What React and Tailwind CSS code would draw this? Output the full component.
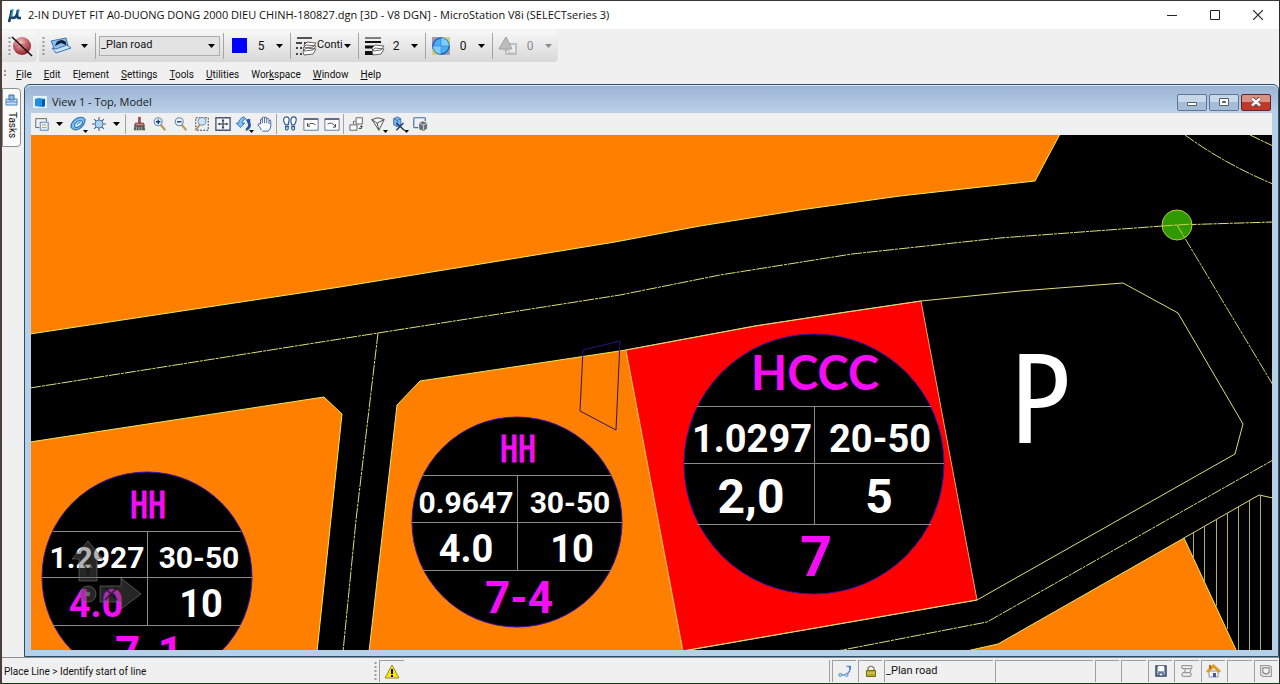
import React from 'react';

const Caret = ({ className = 'text-black' }) => (
  <svg width="7" height="4" viewBox="0 0 7 4" className={className} aria-hidden="true">
    <path d="M0 0h7L3.5 4z" fill="currentColor" />
  </svg>
);

const Icon = ({ size = 18, children }) => (
  <svg width={size} height={size} viewBox="0 0 18 18" fill="none" className="shrink-0" aria-hidden="true">
    {children}
  </svg>
);

const Grip = () => (
  <svg width="3" height="18" viewBox="0 0 3 18" className="shrink-0" aria-hidden="true">
    <path d="M1.5 0v18" stroke="#9a9a9a" strokeWidth="2" strokeDasharray="2 2" />
  </svg>
);

const Separator = () => <div className="mx-[3px] h-[26px] w-px shrink-0 bg-[#a5a5a5]" />;

/* ---------- attribute toolbar icons ---------- */

const NoActiveIcon = () => (
  <svg width="22" height="22" viewBox="0 0 22 22" aria-hidden="true">
    <defs>
      <radialGradient id="ball" cx="0.4" cy="0.3" r="0.7">
        <stop offset="0" stopColor="#f3c9cb" />
        <stop offset="0.45" stopColor="#cf7479" />
        <stop offset="1" stopColor="#8e2029" />
      </radialGradient>
    </defs>
    <circle cx="11" cy="11" r="9" fill="url(#ball)" />
    <path d="M3 12q8-5 16 0" stroke="#b0535a" strokeWidth="0.8" fill="none" />
    <path d="M1 2l20 19" stroke="#111" strokeWidth="1.6" />
  </svg>
);

const TemplateIcon = () => (
  <svg width="24" height="20" viewBox="0 0 24 20" aria-hidden="true">
    <path d="M2 5l15-3 2 8-13 4z" fill="#8fc0f0" stroke="#3a73bd" />
    <path d="M3 12l4 5 15-5-4-3-11 4z" fill="#cfe4f8" stroke="#3a73bd" />
    <path d="M6 10q1-6 7-6 5 1 4 5l-5-2z" fill="#0d2238" />
  </svg>
);

const LineStyleIcon = () => (
  <svg width="21" height="20" viewBox="0 0 21 20" aria-hidden="true">
    <path d="M1 2h15" stroke="#111" strokeWidth="1.4" />
    <path d="M0 7h15" stroke="#111" strokeWidth="1.4" strokeDasharray="6 2" />
    <path d="M0 12h8M0 18h8" stroke="#111" strokeWidth="1.4" strokeDasharray="2 2" />
    <path d="M7 15l3-3 10 1-3 5-9 1zM7 12l3-3 10 1-3 4-9 1zM8 9l3-3 9 1-3 4-8 1z" fill="#fff" stroke="#444" strokeWidth="0.8" />
  </svg>
);

const WeightIcon = () => (
  <svg width="21" height="20" viewBox="0 0 21 20" aria-hidden="true">
    <path d="M1 2h16" stroke="#111" />
    <path d="M1 6h16" stroke="#111" strokeWidth="2" />
    <path d="M1 11h9" stroke="#111" strokeWidth="3" />
    <path d="M1 17h8" stroke="#111" strokeWidth="4" />
    <path d="M8 15l3-3 9 1-3 5-8 1zM8 12l3-3 9 1-3 4-8 1z" fill="#fff" stroke="#444" strokeWidth="0.8" />
  </svg>
);

const TransparencyIcon = () => (
  <svg width="20" height="20" viewBox="0 0 20 20" aria-hidden="true">
    <path d="M1 1h18v18H1z" fill="#a39ab0" />
    <path d="M10 1h9v9zM1 12v7h8z" fill="#d8cf7c" />
    <circle cx="10" cy="10" r="8" fill="#4aaef0" stroke="#1c62c4" strokeWidth="1.5" />
    <path d="M10 2v8h8a8 8 0 0 0-8-8M10 10v8a8 8 0 0 1-8-8z" fill="#7fcdfa" />
    <path d="M10 2v16M2 10h16" stroke="#2b80d8" strokeWidth="0.6" />
  </svg>
);

const PriorityIcon = () => (
  <svg width="20" height="20" viewBox="0 0 20 20" aria-hidden="true">
    <path d="M8 8h10v10H8z" fill="#ededed" stroke="#b3b3b3" strokeWidth="1.5" />
    <path d="M8 1L1 13h13z" fill="#bdbdbd" stroke="#a0a0a0" />
    <path d="M5 14h6v3h5" stroke="#b3b3b3" fill="none" />
  </svg>
);

const AttributeButton = ({ label, icon, value, disabled }) => (
  <button type="button" aria-label={label} disabled={disabled} className="flex h-[26px] w-[60px] items-center">
    <span className="flex w-6 shrink-0 justify-center">{icon}</span>
    <span className={disabled ? 'w-[21px] text-center text-[#8b8b8b]' : 'w-[21px] text-center'}>{value}</span>
    <span className="flex w-4 justify-center">
      <Caret className={disabled ? 'text-[#8b8b8b]' : 'text-black'} />
    </span>
  </button>
);

const AttributeToolbar = () => (
  <div className="flex h-[33px] items-center gap-[2px] text-xs">
    <div className="flex h-8 w-[35px] items-center rounded-r bg-linear-to-b from-[#f8f8f8] to-[#dedede] pl-[6px]">
      <Grip />
      <button type="button" aria-label="Element template">
        <NoActiveIcon />
      </button>
    </div>
    <div className="flex h-8 items-center rounded-r bg-linear-to-b from-[#f8f8f8] to-[#d8d8d8] pr-[2px] pl-[3px]">
      <Grip />
      <button type="button" aria-label="Active template" className="ml-1 flex items-center gap-2 pr-1">
        <TemplateIcon />
        <Caret />
      </button>
      <Separator />
      <div className="relative">
        <select
          aria-label="Active level"
          defaultValue="_Plan road"
          className="h-5 w-[121px] appearance-none border border-[#adadad] bg-[#e3e3e3] pl-px text-[11px]"
        >
          <option>_Plan road</option>
        </select>
        <span className="pointer-events-none absolute top-2 right-[5px]">
          <Caret />
        </span>
      </div>
      <Separator />
      <AttributeButton label="Active color" icon={<span className="size-[15px] bg-[#0000ff]" />} value="5" />
      <Separator />
      <button type="button" aria-label="Active line style" className="flex h-[26px] w-[61px] items-center pl-[2px] text-[11px]">
        <LineStyleIcon />
        <span className="w-[27px] text-left">Conti</span>
        <Caret />
      </button>
      <Separator />
      <AttributeButton label="Active line weight" icon={<WeightIcon />} value="2" />
      <Separator />
      <AttributeButton label="Active transparency" icon={<TransparencyIcon />} value="0" />
      <Separator />
      <AttributeButton label="Active priority" icon={<PriorityIcon />} value="0" disabled />
    </div>
  </div>
);

/* ---------- menu ---------- */

const menus = [
  ['', 'F', 'ile'],
  ['', 'E', 'dit'],
  ['E', 'l', 'ement'],
  ['', 'S', 'ettings'],
  ['', 'T', 'ools'],
  ['', 'U', 'tilities'],
  ['Wor', 'k', 'space'],
  ['', 'W', 'indow'],
  ['', 'H', 'elp'],
];

const MenuBar = () => (
  <nav className="flex h-[22px] items-center gap-3 pt-[2px] pl-[2px] text-[10px]">
    <svg width="2" height="8" viewBox="0 0 2 8" className="-mr-[2px]" aria-hidden="true">
      <path d="M1 0v8" stroke="#9a9a9a" strokeWidth="2" strokeDasharray="2 2" />
    </svg>
    {menus.map(([before, key, after]) => (
      <button key={before + key + after} type="button">
        {before}
        <span className="underline">{key}</span>
        {after}
      </button>
    ))}
  </nav>
);

/* ---------- view tools ---------- */

const Magnifier = ({ children }) => (
  <>
    <path d="M9 9l6 7" stroke="#c49a4a" strokeWidth="2.4" />
    <circle cx="7" cy="6.5" r="4.5" fill="#e3eefb" stroke="#6e87ab" strokeWidth="1.2" />
    {children}
  </>
);

const viewTools = [
  {
    name: 'View attributes',
    caret: true,
    icon: (
      <>
        <path d="M6 13H2V3h12v3" stroke="#555" />
        <path d="M7 7h9v9H7z" fill="#e9f1fc" stroke="#4a77b5" />
        <path d="M9 10h5M9 13h5" stroke="#c09a3c" />
      </>
    ),
  },
  {
    name: 'Display style',
    corner: true,
    icon: (
      <>
        <path d="M1 12q1-7 8-10 6-2 8 2 0 6-6 10-7 4-10-2z" fill="#7cc0f0" stroke="#2e6cb0" strokeWidth="1.2" />
        <path d="M5 11q1-5 6-6 4 0 3 3-2 4-6 5-3 0-3-2z" fill="#d6eefc" stroke="#2e78c4" strokeWidth="1.2" />
        <path d="M8 10q1-3 4-3" stroke="#2e6cb0" />
      </>
    ),
  },
  {
    name: 'Adjust brightness',
    caret: true,
    icon: (
      <>
        <path d="M9 1v16M1 9h16M3.5 3.5l11 11M14.5 3.5l-11 11" stroke="#4c5f75" strokeWidth="1.2" />
        <circle cx="9" cy="9" r="4.5" fill="#a8d4f5" stroke="#4c6e95" />
      </>
    ),
  },
  {
    name: 'Update view',
    separated: true,
    icon: (
      <>
        <path d="M8 1h3v7H8z" fill="#9c4a45" />
        <path d="M5 8h9l1 3H4z" fill="#c98f86" stroke="#6b2f2b" />
        <path d="M4 11h11l1 5H3z" fill="#555" />
        <path d="M6 12v4M9 12v4M12 12v4" stroke="#bbb" />
      </>
    ),
  },
  {
    name: 'Zoom in',
    icon: (
      <Magnifier>
        <path d="M4.5 6.5h5M7 4v5" stroke="#1b3a66" strokeWidth="1.5" />
      </Magnifier>
    ),
  },
  {
    name: 'Zoom out',
    icon: (
      <Magnifier>
        <path d="M4.5 6.5h5" stroke="#1b3a66" strokeWidth="1.5" />
      </Magnifier>
    ),
  },
  {
    name: 'Window area',
    icon: (
      <>
        <path d="M2 2h14v14H2z" stroke="#222" strokeDasharray="2 1.5" />
        <path d="M7 9l-5 7" stroke="#c49a4a" strokeWidth="2.4" />
        <circle cx="9" cy="6" r="4.5" fill="#cfe3fa" stroke="#6e87ab" />
      </>
    ),
  },
  {
    name: 'Fit view',
    icon: (
      <>
        <path d="M1 2h16v14H1z" fill="#f2f4f7" stroke="#4a566b" strokeWidth="1.5" />
        <path d="M9 4v10M4 9h10" stroke="#2d3848" strokeWidth="1.2" />
        <path d="M9 3.5L7.5 6h3zM9 14.5L7.5 12h3zM3 9l2.5-1.5v3zM15 9l-2.5-1.5v3z" fill="#2d3848" />
      </>
    ),
  },
  {
    name: 'Rotate view',
    corner: true,
    icon: (
      <>
        <path d="M9 1Q3 3 3 8H0l5 5 5-5H7q0-3 4-5z" fill="#7fc2ef" stroke="#2b70b5" />
        <path d="M11 4l5-1v4q3 7-5 10v-3q4-3 2-6z" fill="#2656a0" />
      </>
    ),
  },
  {
    name: 'Pan view',
    icon: (
      <path
        d="M5 16q-1-3-4-6 0-2 3-1V4q2-2 2 0V2q2-2 2.5 0V1.5q2-1 2.5 1V3q2-1 2.5 1v1q2-1 2 1v5q0 4-3 6H6M6 4v4M8.5 2v6M11 2.5V8M13.5 5v4"
        fill="#fff"
        stroke="#2f5597"
      />
    ),
  },
  {
    name: 'Walk',
    separated: true,
    icon: (
      <>
        <path d="M5 1q3 0 3 4-1 3-1 5H4Q1 5 2 3q1-2 3-2zM13 1q3 0 3 3 0 3-2 6h-3q-1-3-1-5 0-4 3-4z" fill="#fff" stroke="#2f5597" strokeWidth="1.3" />
        <path d="M4 12h3v2q-1 3-3 1zM11 12h3v3q-2 2-3-1z" fill="#fff" stroke="#2f5597" strokeWidth="1.3" />
      </>
    ),
  },
  {
    name: 'View previous',
    icon: (
      <>
        <path d="M1 3h16v13H1z" fill="#fff" stroke="#5b6c8c" />
        <path d="M1 3.5h16" stroke="#5b6c8c" strokeWidth="2" />
        <path d="M5 11q4-5 9-1M5 8v3.5h3" stroke="#333" />
      </>
    ),
  },
  {
    name: 'View next',
    icon: (
      <>
        <path d="M1 3h16v13H1z" fill="#fff" stroke="#5b6c8c" />
        <path d="M1 3.5h16" stroke="#5b6c8c" strokeWidth="2" />
        <path d="M4 9q5-3 9 3M13 9v3.5h-3" stroke="#333" />
      </>
    ),
  },
  {
    name: 'Copy view',
    separated: true,
    icon: (
      <>
        <path d="M8 2h7v7H8zM1 10h8v6H1z" fill="#fff" stroke="#555" />
        <path d="M11 14h3v-3M12.5 12.5L14 11l1.5 1.5" stroke="#333" />
        <path d="M5 9V6h2" stroke="#555" />
      </>
    ),
  },
  {
    name: 'Clip volume',
    corner: true,
    icon: (
      <>
        <path d="M2 4l7-2 7 2-6 12z" fill="#f4f4f4" stroke="#444" />
        <path d="M2 4l6 4 8-4M8 8l2 8" stroke="#444" />
      </>
    ),
  },
  {
    name: 'Clip mask',
    corner: true,
    icon: (
      <>
        <path d="M3 3l4-2 4 2v7l-4 2-4-2z" fill="#7cb8f0" stroke="#2e6cb0" />
        <path d="M3 3l4 2 4-2M7 5v6" stroke="#2e6cb0" />
        <path d="M6 8l9 8M14 8l-8 8" stroke="#1f3a63" strokeWidth="1.6" />
      </>
    ),
  },
  {
    name: 'Element display',
    icon: (
      <>
        <path d="M7 13H3q-1 0-1-1V3q0-1 1-1h11q1 0 1 1v3" stroke="#3d6fb0" strokeWidth="1.3" />
        <path d="M8 8l4-2 5 2v6l-4 3-5-2z" fill="#6b7178" />
        <path d="M8 8l5 2 4-2M13 10v6" stroke="#d5d9de" />
      </>
    ),
  },
];

const ViewTools = () => (
  <div className="flex h-[22px] items-center bg-[#f0f0f0]">
    {viewTools.map((tool) => (
      <React.Fragment key={tool.name}>
        {tool.separated && <div className="mr-[2px] ml-px h-5 w-px bg-[#a5a5a5]" />}
        <button type="button" aria-label={tool.name} className="relative flex h-[22px] w-[21px] items-center justify-center">
          <Icon size={16}>{tool.icon}</Icon>
          {tool.corner && (
            <span className="absolute right-0 bottom-[2px]">
              <svg width="5" height="3" viewBox="0 0 5 3" aria-hidden="true">
                <path d="M0 0h5L2.5 3z" fill="#000" />
              </svg>
            </span>
          )}
        </button>
        {tool.caret && (
          <button type="button" aria-label={tool.name + ' options'} className="flex w-[15px] justify-center">
            <Caret />
          </button>
        )}
      </React.Fragment>
    ))}
  </div>
);

/* ---------- drawing ---------- */

const LotLabel = ({ cx, cy, r, rows, split, code, cells, lot, codeClass, codeStroke = 0, valueSize, bigSize, lotSize, base, magenta }) => (
  <g>
    <circle cx={cx} cy={cy} r={r} fill="#000" stroke="#3a0fb0" strokeWidth="1" />
    <g stroke="#8a8a8a" strokeWidth="1" shapeRendering="crispEdges">
      <path d={`M${cx - split} ${rows[0]}H${cx + split}M${cx - r} ${rows[1]}H${cx + r}M${cx - split} ${rows[2]}H${cx + split}`} />
      <path d={`M${cx} ${rows[0]}V${rows[2]}`} />
    </g>
    <g textAnchor="middle" className="font-[Roboto,sans-serif] font-bold" fill="#fff">
      <text x={cx + 1} y={base[0]} className={codeClass} fill="#f50df5" stroke="#f50df5" strokeWidth={codeStroke}>{code}</text>
      <text x={cells[0].x} y={base[1]} fontSize={valueSize}>{cells[0].text}</text>
      <text x={cells[1].x} y={base[1]} fontSize={valueSize}>{cells[1].text}</text>
      <text x={cells[2].x} y={base[2]} fontSize={bigSize} fill={magenta ? '#f50df5' : '#fff'}>{cells[2].text}</text>
      <text x={cells[3].x} y={base[2]} fontSize={bigSize}>{cells[3].text}</text>
      <text x={cx + 2} y={base[3]} fontSize={lotSize} fill="#f50df5">{lot}</text>
    </g>
  </g>
);

const hatch = [
  [1193, 533, 557],
  [1204, 526, 581],
  [1216, 520, 606],
  [1227, 513, 629],
  [1238, 507, 651],
  [1249, 501, 651],
  [1260, 495, 651],
];

const MapCanvas = () => (
  <svg
    viewBox="31 135 1241 515"
    preserveAspectRatio="xMidYMid slice"
    className="block min-h-0 w-full flex-1 bg-black"
    role="img"
    aria-label="Land use plan"
  >
    {/* land parcels */}
    <g fill="#ff8000" stroke="#e8e85a" strokeWidth="1">
      <path d="M30 134H1060L1035 181L900 196L800 210L700 226L615 242L340 287L30 334Z" />
      <path d="M30 442L324 397L342 414L317 652H30Z" />
      <path d="M397 405L420 381L626 350L683 652H369Z" />
      <path d="M962 652L998 644L1184 538L1237 652Z" />
    </g>
    <path d="M626 350L755 326L840 313L921 301L977 600L683 651Z" fill="#f00" stroke="#e2a860" />

    {/* road edges and centre lines */}
    <g fill="none" stroke="#dede78" strokeWidth="1">
      <path d="M626 350L755 326L840 313L921 301L1020 291L1123 283L1178 313L1243 424L1235 454L977 600L683 651" />
      <path d="M1184 538L1259 495L1273 498" />
      <g strokeDasharray="11 1 3 1">
        <path d="M30 388L378 333L620 295L720 275L852 254L1000 238L1176 225L1273 222" />
        <path d="M378 333L356 520L343 652" />
        <path d="M832 652L987 622L1273 460" />
        <path d="M1185 135Q1225 164 1273 184M1250 135L1273 146" />
      </g>
    </g>
    <g stroke="#b3ad6a" strokeWidth="1" shapeRendering="crispEdges">
      {hatch.map(([x, top, bottom]) => (
        <path key={x} d={`M${x} ${top}V${bottom}`} />
      ))}
    </g>
    <circle cx="1177" cy="225" r="15" fill="#2f9a00" stroke="#b8c83c" />
    <path d="M1162 226L1192 224M1177 225L1273 385" stroke="#c9d05a" fill="none" strokeDasharray="11 1 3 1" />
    <path d="M583 350L620 341L616 430L580 411Z" fill="none" stroke="#2a1580" />

    <LotLabel
      cx={147} cy={577} r={105} rows={[531, 577, 625]} split={94}
      code="HH" codeClass="font-['Noto_Sans_Mono_CJK_SC','Noto_Sans_CJK_SC',sans-serif] text-[36px] font-normal" codeStroke={1}
      cells={[{ x: 97, text: '1.2927' }, { x: 199, text: '30-50' }, { x: 96, text: '4.0' }, { x: 201, text: '10' }]}
      lot="7-1" valueSize={30} bigSize={38} lotSize={44} base={[518, 568, 617, 668]} magenta
    />
    <LotLabel
      cx={517} cy={522} r={105} rows={[475, 522, 570]} split={94}
      code="HH" codeClass="font-['Noto_Sans_Mono_CJK_SC','Noto_Sans_CJK_SC',sans-serif] text-[36px] font-normal" codeStroke={1}
      cells={[{ x: 466, text: '0.9647' }, { x: 570, text: '30-50' }, { x: 466, text: '4.0' }, { x: 572, text: '10' }]}
      lot="7-4" valueSize={30} bigSize={38} lotSize={44} base={[462, 513, 562, 613]}
    />
    <LotLabel
      cx={814} cy={464} r={130} rows={[406, 463, 524]} split={117}
      code="HCCC" codeClass="font-[Lato,sans-serif] text-[47px]"
      cells={[{ x: 752, text: '1.0297' }, { x: 880, text: '20-50' }, { x: 751, text: '2,0' }, { x: 879, text: '5' }]}
      lot="7" valueSize={38} bigSize={48} lotSize={56} base={[390, 452, 513, 576]}
    />

    {/* parking */}
    <text x="1041" y="443" textAnchor="middle" fontSize="121" fill="#fff" className="font-['Noto_Sans_Mono_CJK_SC','Noto_Sans_CJK_SC',sans-serif]">
      P
    </text>

    {/* ACS triad */}
    <g fill="#555" fillOpacity="0.45" stroke="#777" strokeOpacity="0.6">
      <path d="M88 541L103 559H97V581H79V559H72Z" />
      <path d="M100 586H121V578L141 594L121 609V602H100Z" />
      <circle cx="88" cy="594" r="8" />
      <path d="M84 565l4 5 4-5M88 570v7M105 588l12 12M117 588l-12 12" fill="none" stroke="#111" strokeWidth="2" />
      <circle cx="88" cy="594" r="2" fill="#aaa" />
    </g>
  </svg>
);

/* ---------- view window ---------- */

const ViewWindow = () => (
  <section className="flex min-w-0 flex-1 flex-col rounded-t-md border border-[#27506a] bg-[#b6d0e8] px-[6px] pb-[6px]">
    <header className="-mx-[6px] flex h-7 items-center rounded-t-md border-t border-[#dce8f4] bg-linear-to-b from-[#9cb5d3] to-[#bbd0e8] pt-[5px] pr-[7px] pl-2">
      <svg width="14" height="14" viewBox="0 0 14 14" aria-hidden="true">
        <path d="M0 1h14v12H0z" fill="#dff2fd" />
        <path d="M2 4l4-1 6 1v7l-3 1-7-1z" fill="#1c8fe0" />
        <path d="M9 5l3-1v7l-3 1z" fill="#0c54a8" />
      </svg>
      <h2 className="ml-[5px] flex-1 font-['Open_Sans',sans-serif] text-[11px] text-[#1b1b1b]">View 1 - Top, Model</h2>
      <div className="flex gap-[2px]">
        <button type="button" aria-label="Minimize view" className="flex h-[17px] w-[30px] items-center justify-center rounded-xs border border-[#5f7896] bg-linear-to-b from-[#c6d8ea] from-50% to-[#a4bcd8] to-50%">
          <svg width="12" height="10" viewBox="0 0 12 10" aria-hidden="true">
            <path d="M1.5 5.5h9v3h-9z" fill="#fff" stroke="#555e6b" />
          </svg>
        </button>
        <button type="button" aria-label="Maximize view" className="flex h-[17px] w-[30px] items-center justify-center rounded-xs border border-[#5f7896] bg-linear-to-b from-[#c6d8ea] from-50% to-[#a4bcd8] to-50%">
          <svg width="12" height="10" viewBox="0 0 12 10" aria-hidden="true">
            <path d="M1.5 1.5h9v7h-9z" fill="#fff" stroke="#555e6b" />
            <path d="M4.5 4.5h3v1h-3z" stroke="#555e6b" />
          </svg>
        </button>
        <button type="button" aria-label="Close view" className="flex h-[17px] w-[30px] items-center justify-center rounded-xs border border-[#5e2630] bg-linear-to-b from-[#dc9082] from-50% to-[#bf3a26] to-50%">
          <svg width="12" height="10" viewBox="0 0 12 10" aria-hidden="true">
            <path d="M2 1l8 8M10 1L2 9" stroke="#6a3a3a" strokeWidth="4" />
            <path d="M2 1.5l8 7M10 1.5l-8 7" stroke="#fff" strokeWidth="2.5" />
          </svg>
        </button>
      </div>
    </header>
    <ViewTools />
    <MapCanvas />
  </section>
);

const TaskTab = () => (
  <aside className="w-[22px] shrink-0 pt-1">
    <button type="button" className="flex h-[59px] w-[19px] flex-col items-center gap-[6px] rounded-r border border-[#8f8f8f] bg-[#fbfbfb] pt-[5px]">
      <svg width="13" height="12" viewBox="0 0 13 12" aria-hidden="true">
        <path d="M1 5h11v6H1z" fill="#cfe2f7" stroke="#4a80c4" />
        <path d="M4 1h5v5H4z" fill="#8cb8ea" stroke="#3a6cb0" />
        <path d="M1 8h11" stroke="#4a80c4" />
      </svg>
      <span className="text-[10px] leading-none [writing-mode:vertical-rl]">Tasks</span>
    </button>
  </aside>
);

/* ---------- status bar ---------- */

const cellClass = 'flex h-[22px] items-center justify-center border-t border-l border-[#a0a0a0] bg-[#f0f0f0]';

const StatusBar = () => (
  <footer className="flex h-[26px] items-center border-t border-[#8c8c8c] pr-px text-[10px]">
    <p className="w-[372px] shrink-0 pt-[2px] pl-[2px]">Place Line &gt; Identify start of line</p>
    <Grip />
    <button type="button" aria-label="Messages" className={cellClass + ' ml-[2px] w-[25px]'}>
      <svg width="16" height="15" viewBox="0 0 16 15" aria-hidden="true">
        <path d="M8 1L15 14H1z" fill="#f7e21c" stroke="#a08c14" strokeLinejoin="round" />
        <path d="M8 5v5M8 11v2" stroke="#111" strokeWidth="2" />
      </svg>
    </button>
    <div className="h-[22px] flex-1 border-r border-[#a0a0a0]" />
    <div className="ml-[2px] flex gap-[2px]">
      <button type="button" aria-label="Snap mode" className={cellClass + ' w-6'}>
        <Icon size={14}>
          <path d="M3 14h8l4-5V3" stroke="#5a8fd0" strokeWidth="1.8" />
          <circle cx="3" cy="14" r="2" fill="#bcd7f5" stroke="#4a80c4" />
          <circle cx="11" cy="14" r="2" fill="#bcd7f5" stroke="#4a80c4" />
          <path d="M11 3h5v4" stroke="#4a80c4" strokeWidth="1.5" />
        </Icon>
      </button>
      <button type="button" aria-label="Locks" className={cellClass + ' w-6'}>
        <svg width="12" height="12" viewBox="0 0 12 12" fill="none" aria-hidden="true">
          <path d="M3 6V3q3-3.5 6 0v3" stroke="#8a8a6a" strokeWidth="1.5" />
          <path d="M1.5 5.5h9v6h-9z" fill="#b5a92c" stroke="#766c14" />
          <path d="M2 8h8" stroke="#dcd363" />
        </svg>
      </button>
      <div className={cellClass + ' w-[109px]'}>
        <span className="flex-1 pl-px text-[11px]">_Plan road</span>
      </div>
      <div className={cellClass + ' w-[98px]'} />
    </div>
    <div className="ml-[2px] grid w-[183px] grid-cols-7 gap-[2px]">
      <div className={cellClass} />
      <div className={cellClass} />
      <button type="button" aria-label="Save" className={cellClass}>
        <svg width="12" height="12" viewBox="0 0 12 12" aria-hidden="true">
          <path d="M1 1h10v10H1z" fill="#8ea6cc" stroke="#3b4a66" strokeWidth="1.5" />
          <path d="M3 1h6v5H3z" fill="#fff" />
          <path d="M4 8h4v3H4z" fill="#e8eef8" stroke="#3b4a66" />
        </svg>
      </button>
      <button type="button" aria-label="Design history" className={cellClass}>
        <Icon size={14}>
          <path d="M3 2h11q3 2 0 4l-1 5q3 3 0 5H4q-3-2 0-5h2l1-5H3q-2-2 0-4zM7 6h7M4 11h9" stroke="#999" strokeWidth="1.5" />
        </Icon>
      </button>
      <button type="button" aria-label="Home" className={cellClass}>
        <svg width="15" height="14" viewBox="0 0 15 14" aria-hidden="true">
          <path d="M3 7h9v6H3z" fill="#f4f4fa" stroke="#8d93a8" />
          <path d="M7 9h3v4H7z" fill="#4a52a8" />
          <path d="M1 8l6.5-6L14 8" stroke="#e29a1c" strokeWidth="3" fill="none" />
          <path d="M3 1h2v4H3z" fill="#b06a14" />
        </svg>
      </button>
      <div className={cellClass} />
      <button type="button" aria-label="Digital rights" className={cellClass}>
        <Icon size={14}>
          <path d="M2 2h11l3 2v12H5l-3-2z" fill="#e3e3e3" stroke="#999" strokeWidth="1.3" />
          <path d="M5 5h8v6l-4 2-4-2z" fill="#f2f2f2" stroke="#888" strokeWidth="1.5" />
        </Icon>
      </button>
    </div>
  </footer>
);

const TitleBar = () => (
  <header className="flex h-7 items-center bg-white pl-[5px]">
    <svg width="16" height="15" viewBox="0 0 16 15" fill="none" aria-hidden="true">
      <path d="M5 2L2 14M4.5 3Q3 10 6 10q4 0 5-8M11 2q-2 8 1 8h2" stroke="#123f63" strokeWidth="2.6" />
      <path d="M6 1L4 9M12 1l-1 5" stroke="#2f9ad0" strokeWidth="1.3" />
    </svg>
    <h1 className="ml-[5px] flex-1 font-['Open_Sans',sans-serif] text-[11px] whitespace-nowrap">
      2-IN DUYET FIT A0-DUONG DONG 2000 DIEU CHINH-180827.dgn [3D - V8 DGN] - MicroStation V8i (SELECTseries 3)
    </h1>
    <div className="flex">
      <button type="button" aria-label="Minimize" className="flex h-7 w-[43px] items-center justify-center">
        <svg width="10" height="10" viewBox="0 0 10 10" aria-hidden="true">
          <path d="M0 5.5h10" stroke="#222" />
        </svg>
      </button>
      <button type="button" aria-label="Maximize" className="flex h-7 w-[43px] items-center justify-center">
        <svg width="10" height="10" viewBox="0 0 10 10" fill="none" aria-hidden="true">
          <path d="M.5.5h9v9h-9z" stroke="#222" />
        </svg>
      </button>
      <button type="button" aria-label="Close" className="flex h-7 w-[43px] items-center justify-center">
        <svg width="10" height="10" viewBox="0 0 10 10" aria-hidden="true">
          <path d="M0 0l10 10M10 0L0 10" stroke="#222" strokeWidth="1.2" />
        </svg>
      </button>
    </div>
  </header>
);

const App = () => (
  <div className="flex h-screen flex-col border-t border-r border-b border-l-2 border-t-[#3c3836] border-r-[#2e2a2a] border-b-[#0c3a12] border-l-[#4a3f3c] bg-[#f0f0f0] font-[Roboto,sans-serif] text-[#111]">
    <TitleBar />
    <AttributeToolbar />
    <MenuBar />
    <main className="flex min-h-0 flex-1">
      <TaskTab />
      <ViewWindow />
    </main>
    <StatusBar />
  </div>
);

export default App;
